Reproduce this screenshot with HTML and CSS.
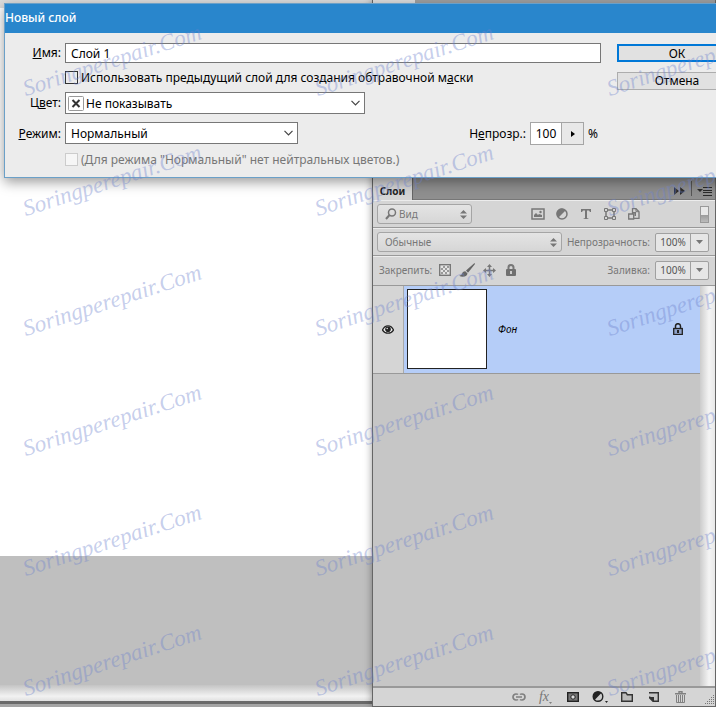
FILE: index.html
```
<!doctype html>
<html lang="ru">

<head>
    <meta charset="utf-8" />
    <meta name="viewport" content="width=device-width, initial-scale=1">
    <title>Новый слой</title>
    <link rel="stylesheet" href="styles.css">
</head>

<body>
    <div class="workspace">
        <div class="document">
            <div class="page"></div>
            <div class="pasteboard"></div>
            <div class="doc-scroll"></div>
            <div class="doc-edge"></div>
        </div>

        <div class="panel">
            <div class="dock-top"></div>
            <div class="tab-bar">
                <button type="button" class="tab">Слои</button>
                <button type="button" class="tab-tool" aria-label="Свернуть панель">
                    <svg width="12" height="8" viewBox="0 0 12 8"><path d="M0 0l5 4-5 4zM6 0l5 4-5 4z" fill="#2b2b2b" /></svg>
                </button>
                <button type="button" class="tab-tool tab-menu" aria-label="Меню панели">
                    <svg width="15" height="9" viewBox="0 0 15 9"><path d="M0 2h6L3 5z" fill="#2b2b2b" /><path d="M6 .5h9M6 3.500h9M6 5.500h9M6 8.500h9" stroke="#2b2b2b" /></svg>
                </button>
            </div>

            <div class="panel-row">
                <div class="soft-select filter-select">
                    <svg class="lens" width="12" height="12" viewBox="0 0 12 12"><circle cx="7" cy="4.500" r="3.500" fill="none" stroke="#777" stroke-width="1.500" /><path d="M4.500 7L1 11" stroke="#777" stroke-width="2" /></svg>
                    <select aria-label="Тип фильтра"><option>Вид</option></select>
                    <svg class="spin" width="7" height="9" viewBox="0 0 7 9"><path d="M0 3.500L3.500 0 7 3.500zM0 5.500h7L3.500 9z" fill="#777" /></svg>
                </div>
                <div class="filter-icons">
                    <button type="button" aria-label="Пиксельные слои">
                        <svg width="14" height="12" viewBox="0 0 14 12"><rect x="1" y="1" width="12" height="10" fill="none" stroke="#777" stroke-width="1.500" /><path d="M3 9V7l2-2 2 2 1-1 3 1v2z" fill="#777" /><circle cx="9.500" cy="4" r="1.200" fill="#777" /></svg>
                    </button>
                    <button type="button" aria-label="Корректирующие слои">
                        <svg width="12" height="12" viewBox="0 0 12 12"><circle cx="6" cy="6" r="5" fill="#d5d5d5" stroke="#777" stroke-width="1.500" /><path d="M9.500 2.500a5 5 0 1 0-7 7z" fill="#777" /></svg>
                    </button>
                    <button type="button" aria-label="Текстовые слои">
                        <svg width="12" height="12" viewBox="0 0 12 12"><path d="M1 1h10v3h-1L9 2.500H7V10l2 1H3l2-1V2.500H3L2 4H1z" fill="#777" /></svg>
                    </button>
                    <button type="button" aria-label="Слои-фигуры">
                        <svg width="12" height="12" viewBox="0 0 12 12"><path d="M2 2h8v8H2z" fill="none" stroke="#777" stroke-width="1.500" /><path d="M.5.5h3v3h-3zM8.500.5h3v3h-3zM.5 8.500h3v3h-3zM8.500 8.500h3v3h-3z" fill="#d5d5d5" stroke="#777" /></svg>
                    </button>
                    <button type="button" aria-label="Смарт-объекты">
                        <svg width="12" height="12" viewBox="0 0 12 12"><path d="M4.500.7h3.500l3 3v6.600H4.500z" fill="#d5d5d5" stroke="#777" stroke-width="1.300" /><path d="M8 .7v3h3" fill="none" stroke="#777" /><path d="M.7 6h5v5h-5z" fill="#d5d5d5" stroke="#777" stroke-width="1.300" /><path d="M5 4h3v4H6.500V5.500H5z" fill="#777" /></svg>
                    </button>
                </div>
                <button type="button" class="filter-switch" aria-label="Фильтрация слоев"></button>
            </div>

            <div class="panel-row">
                <div class="soft-select blend-select">
                    <select aria-label="Режим наложения"><option>Обычные</option></select>
                    <svg class="spin" width="7" height="9" viewBox="0 0 7 9"><path d="M0 3.500L3.500 0 7 3.500zM0 5.500h7L3.500 9z" fill="#777" /></svg>
                </div>
                <label for="opacity" class="value-label">Непрозрачность:</label>
                <div class="value-box">
                    <input type="text" id="opacity" value="100%">
                    <button type="button" aria-label="Изменить непрозрачность"><svg width="7" height="4" viewBox="0 0 7 4"><path d="M0 0h7L3.500 4z" fill="#777" /></svg></button>
                </div>
            </div>

            <div class="panel-row lock-row">
                <span class="lock-label">Закрепить:</span>
                <div class="lock-icons">
                    <button type="button" aria-label="Прозрачные пиксели">
                        <svg width="12" height="12" viewBox="0 0 12 12"><rect x=".7" y=".7" width="10.600" height="10.600" fill="#e4e4e4" stroke="#777" stroke-width="1.400" /><path d="M4 2h2v2H4zM8 2h2v2H8zM2 4h2v2H2zM6 4h2v2H6zM4 6h2v2H4zM8 6h2v2H8zM2 8h2v2H2zM6 8h2v2H6z" fill="#999" /></svg>
                    </button>
                    <button type="button" aria-label="Цвета пикселов">
                        <svg width="16" height="15" viewBox="0 0 16 15"><path d="M15.500 0L7 7.500l2 2.200L16 1zM6.300 8.200c-2 0-2.800 1-3.300 2.600-.4 1.200-1.500 1.800-3 1.900 3 1.800 8 1.300 8.500-2.300z" fill="#666" /></svg>
                    </button>
                    <button type="button" aria-label="Положение">
                        <svg width="13" height="13" viewBox="0 0 13 13"><path d="M6.500 2v9M2 6.500h9" stroke="#777" stroke-width="1.500" /><path d="M6.500 0L9 3H4zM6.500 13L4 10h5zM0 6.500L3 4v5zM13 6.500L10 9V4z" fill="#777" /></svg>
                    </button>
                    <button type="button" aria-label="Закрепить все">
                        <svg width="10" height="13" viewBox="0 0 10 13"><path d="M2.500 6V3.500a2.500 2.500 0 0 1 5 0V6" fill="none" stroke="#777" stroke-width="2" /><rect y="5" width="10" height="7" rx="1" fill="#707070" /><rect x="4" y="7" width="2" height="3" fill="#ccc" /></svg>
                    </button>
                </div>
                <label for="fill" class="value-label">Заливка:</label>
                <div class="value-box">
                    <input type="text" id="fill" value="100%">
                    <button type="button" aria-label="Изменить заливку"><svg width="7" height="4" viewBox="0 0 7 4"><path d="M0 0h7L3.500 4z" fill="#777" /></svg></button>
                </div>
            </div>

            <div class="layers">
                <div class="layer-list">
                    <div class="layer">
                        <button type="button" class="eye" aria-label="Видимость слоя">
                            <svg width="12" height="9" viewBox="0 0 12 9"><path d="M.5 5C2 1.500 4 .8 6 .8S10 1.500 11.500 5C10 7.500 8 8.200 6 8.200S2 7.500.5 5z" fill="#eee" stroke="#222" stroke-width="1.300" /><circle cx="6" cy="4.200" r="2.800" fill="#222" /><circle cx="5.200" cy="3.500" r=".8" fill="#ddd" /></svg>
                        </button>
                        <div class="layer-body">
                            <div class="thumb"></div>
                            <span class="layer-name">Фон</span>
                            <svg width="10" height="12" viewBox="0 0 10 12"><path d="M2.500 5.500V3a2.500 2.300 0 0 1 5 0v2.500" fill="none" stroke="#222" stroke-width="1.500" /><rect x=".7" y="5.500" width="8.600" height="6" fill="#8fa3cc" stroke="#222" stroke-width="1.300" /><rect x="4" y="7" width="2" height="3" fill="#222" /></svg>
                        </div>
                    </div>
                </div>
                <div class="layer-scroll"></div>
            </div>

            <div class="panel-footer">
                <button type="button" aria-label="Связать слои">
                    <svg width="14" height="8" viewBox="0 0 14 8"><path d="M6 6.500C5.500 7 5 7 4 7a3 3 0 0 1 0-6c1 0 1.500 0 2 .5M8 1.500C8.500 1 9 1 10 1a3 3 0 0 1 0 6c-1 0-1.500 0-2-.5M4 4h6" fill="none" stroke="#808080" stroke-width="1.700" /></svg>
                </button>
                <button type="button" class="fx" aria-label="Стиль слоя">fx<svg width="3" height="2" viewBox="0 0 3 2"><path d="M0 0h3L1.500 2z" fill="#808080" /></svg></button>
                <button type="button" aria-label="Добавить маску">
                    <svg width="12" height="10" viewBox="0 0 12 10"><rect x=".7" y=".7" width="10.600" height="8.600" fill="#777" stroke="#222" stroke-width="1.400" /><circle cx="6" cy="5" r="2.200" fill="#ddd" stroke="#222" /></svg>
                </button>
                <button type="button" aria-label="Корректирующий слой">
                    <svg width="16" height="12" viewBox="0 0 16 12"><circle cx="6" cy="5.500" r="4.800" fill="#ccc" stroke="#222" stroke-width="1.400" /><path d="M9.400 2.100a4.800 4.800 0 1 0-6.800 6.800z" fill="#222" /><path d="M13 10h3l-1.500 2z" fill="#222" /></svg>
                </button>
                <button type="button" aria-label="Создать группу">
                    <svg width="12" height="10" viewBox="0 0 12 10"><path d="M.7 9.300V.7h4.300l1.300 2h5v6.600z" fill="#bbb" stroke="#333" stroke-width="1.400" /></svg>
                </button>
                <button type="button" aria-label="Новый слой">
                    <svg width="10" height="10" viewBox="0 0 10 10"><path d="M0 .7h9.300v8.600H4L.7 6V4.500" fill="#c5c5c5" stroke="#333" stroke-width="1.400" /><path d="M0 5h5v5z" fill="#333" /></svg>
                </button>
                <button type="button" aria-label="Удалить слой">
                    <svg width="11" height="12" viewBox="0 0 11 12"><path d="M4 2V.7h3V2M0 2.700h11" fill="none" stroke="#808080" stroke-width="1.400" /><path d="M1.500 4v7.500h8V4M3.500 4v7M5.500 4v7M7.500 4v7" fill="none" stroke="#808080" /></svg>
                </button>
                <svg class="grip" width="10" height="10" viewBox="0 0 10 10"><path d="M8.500 1v9M6.500 3v7M4.500 5v5M2.500 7v3M.5 9v1" stroke="#777" stroke-dasharray="1 1" /></svg>
            </div>
        </div>

        <div class="dialog" role="dialog" aria-labelledby="dialogTitle">
            <h1 id="dialogTitle">Новый слой</h1>
            <form class="dialog-body">
                <div class="fields">
                    <label for="name"><u>И</u>мя:</label>
                    <input type="text" id="name" class="text-field" value="Слой 1">

                    <div class="check-row">
                        <input type="checkbox" id="clip">
                        <label for="clip">Использовать предыдущий слой для создания обтравочной м<u>а</u>ски</label>
                    </div>

                    <label for="color">Ц<u>в</u>ет:</label>
                    <div class="select-box color-select">
                        <svg class="no-color" width="16" height="15" viewBox="0 0 16 15"><rect x=".5" y=".5" width="15" height="14" rx="1" fill="#fff" stroke="#999" /><path d="M4.500 4l7 7M11.500 4l-7 7" stroke="#333" stroke-width="2" /></svg>
                        <select id="color"><option>Не показывать</option></select>
                        <svg class="chevron" width="9" height="6" viewBox="0 0 9 6"><path d="M.5.8l4 4 4-4" fill="none" stroke="#444" stroke-width="1.200" /></svg>
                    </div>

                    <label for="mode"><u>Р</u>ежим:</label>
                    <div class="mode-row">
                        <div class="select-box mode-select">
                            <select id="mode"><option>Нормальный</option></select>
                            <svg class="chevron" width="9" height="6" viewBox="0 0 9 6"><path d="M.5.8l4 4 4-4" fill="none" stroke="#444" stroke-width="1.200" /></svg>
                        </div>
                        <div class="opacity">
                            <label for="layerOpacity">Н<u>е</u>прозр.:</label>
                            <div class="opacity-box">
                                <input type="text" id="layerOpacity" value="100">
                                <button type="button" aria-label="Показать ползунок"><svg width="4" height="6" viewBox="0 0 4 6"><path d="M0 0l4 3-4 3z" /></svg></button>
                            </div>
                            <span class="unit">%</span>
                        </div>
                    </div>

                    <div class="check-row disabled">
                        <input type="checkbox" id="neutral" disabled>
                        <label for="neutral">(Для режима "Нормальный" нет нейтральных цветов.)</label>
                    </div>
                </div>
                <div class="buttons">
                    <button type="button" class="ok">ОК</button>
                    <button type="button">Отмена</button>
                </div>
            </form>
        </div>

        <div class="watermarks" aria-hidden="true">
            <span>Soringperepair.Com</span><span>Soringperepair.Com</span><span>Soringperepair.Com</span>
            <span>Soringperepair.Com</span><span>Soringperepair.Com</span><span>Soringperepair.Com</span>
            <span>Soringperepair.Com</span><span>Soringperepair.Com</span><span>Soringperepair.Com</span>
            <span>Soringperepair.Com</span><span>Soringperepair.Com</span><span>Soringperepair.Com</span>
            <span>Soringperepair.Com</span><span>Soringperepair.Com</span><span>Soringperepair.Com</span>
            <span>Soringperepair.Com</span><span>Soringperepair.Com</span><span>Soringperepair.Com</span>
        </div>
    </div>
</body>

</html>
```
FILE: styles.css
```
* {
    box-sizing: border-box;
}

body {
    margin: 0;
    font-family: "Noto Sans", "Open Sans", sans-serif;
    font-size: 12px;
    color: #000;
}

button,
input,
select {
    margin: 0;
    padding: 0;
    font: inherit;
    color: inherit;
    appearance: none;
    border: none;
    border-radius: 0;
    background: none;
}

svg {
    display: block;
    flex: none;
}

.workspace {
    position: relative;
    display: flex;
    height: 100vh;
    overflow: hidden;
    background: #a0a0a0;
}

/* document window */
.document {
    flex: 1;
    display: flex;
    flex-direction: column;
    background: #bfbfbf;
}

.page {
    flex: 556;
    background: linear-gradient(#ddd 8px, #fff 8px);
}

.pasteboard {
    flex: 129;
}

.doc-scroll {
    height: 16px;
    background: linear-gradient(#c4c4c4, #f2f2f2 70%, #e0e0e0);
}

.doc-edge {
    height: 6px;
    background: #a5a5a5;
    border-top: 3px solid #6a6a6a;
}

/* layers panel */
.panel {
    width: 344px;
    display: flex;
    flex-direction: column;
    background: #d5d5d5;
    border: 1px solid #666;
    border-top: none;
    box-shadow: 0 0 8px rgba(0, 0, 0, 0.4);
    font-size: 10px;
    color: #777;
}

.dock-top {
    height: 177px;
    background: linear-gradient(90deg, #ddd 42px, #a0a0a0 42px);
}

.tab-bar {
    height: 23px;
    display: flex;
    align-items: center;
    padding-right: 2px;
    background: #8f8f8f;
    border-bottom: 1px solid #777;
}

.tab {
    height: 23px;
    width: 40px;
    padding-top: 5px;
    margin-right: auto;
    background: #d5d5d5;
    border-right: 1px solid #666;
    font-weight: bold;
    color: #222;
}

.tab-tool {
    padding: 6px 5px 0 0;
}

.tab-menu {
    padding-left: 5px;
    padding-right: 1px;
    border-left: 1px solid #555;
}

.panel-row {
    height: 28px;
    display: flex;
    align-items: center;
    padding: 0 6px 0 4px;
    border-top: 1px solid #ececec;
    border-bottom: 1px solid #999;
}

.lock-row {
    height: 30px;
    padding-bottom: 2px;
}

.soft-select {
    height: 20px;
    display: flex;
    align-items: center;
    padding: 0 4px 0 7px;
    background: linear-gradient(#e4e4e4, #d6d6d6);
    border: 1px solid #a5a5a5;
    border-radius: 3px;
}

.soft-select select {
    flex: 1;
    min-width: 0;
}

.filter-select {
    width: 95px;
}

.lens {
    margin-right: 2px;
}

.blend-select {
    flex: 1;
}

.filter-icons {
    display: flex;
    margin: 0 auto;
}

.filter-icons button,
.lock-icons button {
    width: 24px;
    display: flex;
    justify-content: center;
}

.filter-switch {
    width: 9px;
    height: 17px;
    background: linear-gradient(#e8e8e8 50%, #999 50%, #bbb);
    border: 1px solid #999;
}

.value-label {
    padding: 0 5px;
}

.value-box {
    width: 54px;
    height: 19px;
    display: flex;
    border: 1px solid #a0a0a0;
    border-radius: 2px;
    background: #e6e6e6;
}

.value-box input {
    width: 35px;
    text-align: center;
    border-right: 1px solid #a0a0a0;
    color: #555;
}

.value-box button {
    flex: 1;
    display: flex;
    align-items: center;
    justify-content: center;
}

.lock-label {
    padding: 0 2px;
}

.lock-icons {
    display: flex;
    align-items: center;
    margin-right: auto;
}

.lock-icons button {
    width: 22px;
}

.layers {
    flex: 1;
    display: flex;
}

.layer-list {
    flex: 1;
    background: #c6c6c6;
}

.layer-scroll {
    width: 15px;
    background: linear-gradient(90deg, #ccc, #f4f4f4 60%, #e8e8e8);
}

.layer {
    display: flex;
    height: 88px;
    border-bottom: 1px solid #999;
}

.eye {
    width: 31px;
    display: flex;
    align-items: center;
    justify-content: center;
    background: #d5d5d5;
    border-right: 1px solid #aaa;
}

.layer-body {
    flex: 1;
    display: flex;
    align-items: center;
    padding: 0 17px 1px 3px;
    background: #b5cdf8;
}

.thumb {
    width: 80px;
    height: 80px;
    background: #fff;
    border: 1px solid #222;
}

.layer-name {
    flex: 1;
    padding-left: 11px;
    font-style: italic;
    color: #000;
}

.panel-footer {
    height: 20px;
    display: flex;
    align-items: center;
    justify-content: flex-end;
    border-top: 2px solid #999;
}

.panel-footer button {
    width: 27px;
    display: flex;
    align-items: center;
    justify-content: center;
}

.panel-footer .fx {
    align-items: flex-end;
    font: italic 14px/14px "Liberation Serif", serif;
}

.grip {
    margin: 4px 0 0 11px;
}

/* new layer dialog */
.dialog {
    position: absolute;
    top: 3px;
    left: 4px;
    right: -37px;
    background: #ececec;
    border: 1px solid #6ba0c8;
    box-shadow: 0 4px 12px rgba(0, 0, 0, 0.4);
}

.dialog h1 {
    margin: 0;
    height: 29px;
    font-size: 12px;
    line-height: 28px;
    font-weight: 500;
    color: #fff;
    background: #2986cc;
}

.dialog-body {
    display: flex;
    gap: 16px;
    padding: 10px 15px 11px 0;
}

.fields {
    flex: 1;
    display: grid;
    grid-template-columns: 56px 1fr;
    gap: 8px 4px;
    align-items: center;
}

.fields > label {
    text-align: right;
    line-height: 20px;
}

.text-field {
    height: 20px;
    padding: 0 5px;
    background: #fff;
    border: 1px solid #777;
}

.check-row {
    grid-column: 2;
    height: 13px;
    display: flex;
    align-items: center;
    gap: 3px;
}

.check-row input {
    width: 13px;
    height: 13px;
    border: 1px solid #333;
}

.check-row.disabled {
    color: #777;
}

.check-row.disabled input {
    background: #f6f6f6;
    border-color: #ccc;
}

.select-box {
    height: 22px;
    display: flex;
    align-items: center;
    padding: 0 4px 0 5px;
    background: #fff;
    border: 1px solid #777;
}

.select-box select {
    flex: 1;
}

.color-select {
    width: 300px;
    padding-left: 2px;
    gap: 2px;
}

.mode-row {
    display: flex;
    justify-content: space-between;
}

.mode-select {
    width: 233px;
}

.opacity {
    display: flex;
    align-items: center;
    gap: 4px;
}

.unit {
    width: 13px;
}

.opacity-box {
    width: 54px;
    height: 23px;
    display: flex;
    border: 1px solid #a5a5a5;
}

.opacity-box input {
    width: 31px;
    text-align: center;
    background: #fff;
    border-right: 1px solid #a5a5a5;
}

.opacity-box button {
    flex: 1;
    display: flex;
    align-items: center;
    justify-content: center;
    background: #e8e8e8;
}

.buttons {
    width: 120px;
    padding-top: 1px;
    display: flex;
    flex-direction: column;
    gap: 10px;
}

.buttons button {
    height: 18px;
    line-height: 16px;
    background: #e1e1e1;
    border: 1px solid #adadad;
}

.buttons .ok {
    border: 2px solid #0078d7;
}

/* repeated site mark over everything */
.watermarks {
    position: absolute;
    top: 0;
    left: 27px;
    display: grid;
    grid-template-columns: repeat(3, 292px);
    grid-auto-rows: 120px;
    pointer-events: none;
    font: italic 23px/24px "Liberation Serif", serif;
    color: rgba(110, 130, 205, 0.4);
}

.watermarks span {
    padding-top: 77px;
    transform: rotate(-18deg);
    transform-origin: 0 100px;
}
```
